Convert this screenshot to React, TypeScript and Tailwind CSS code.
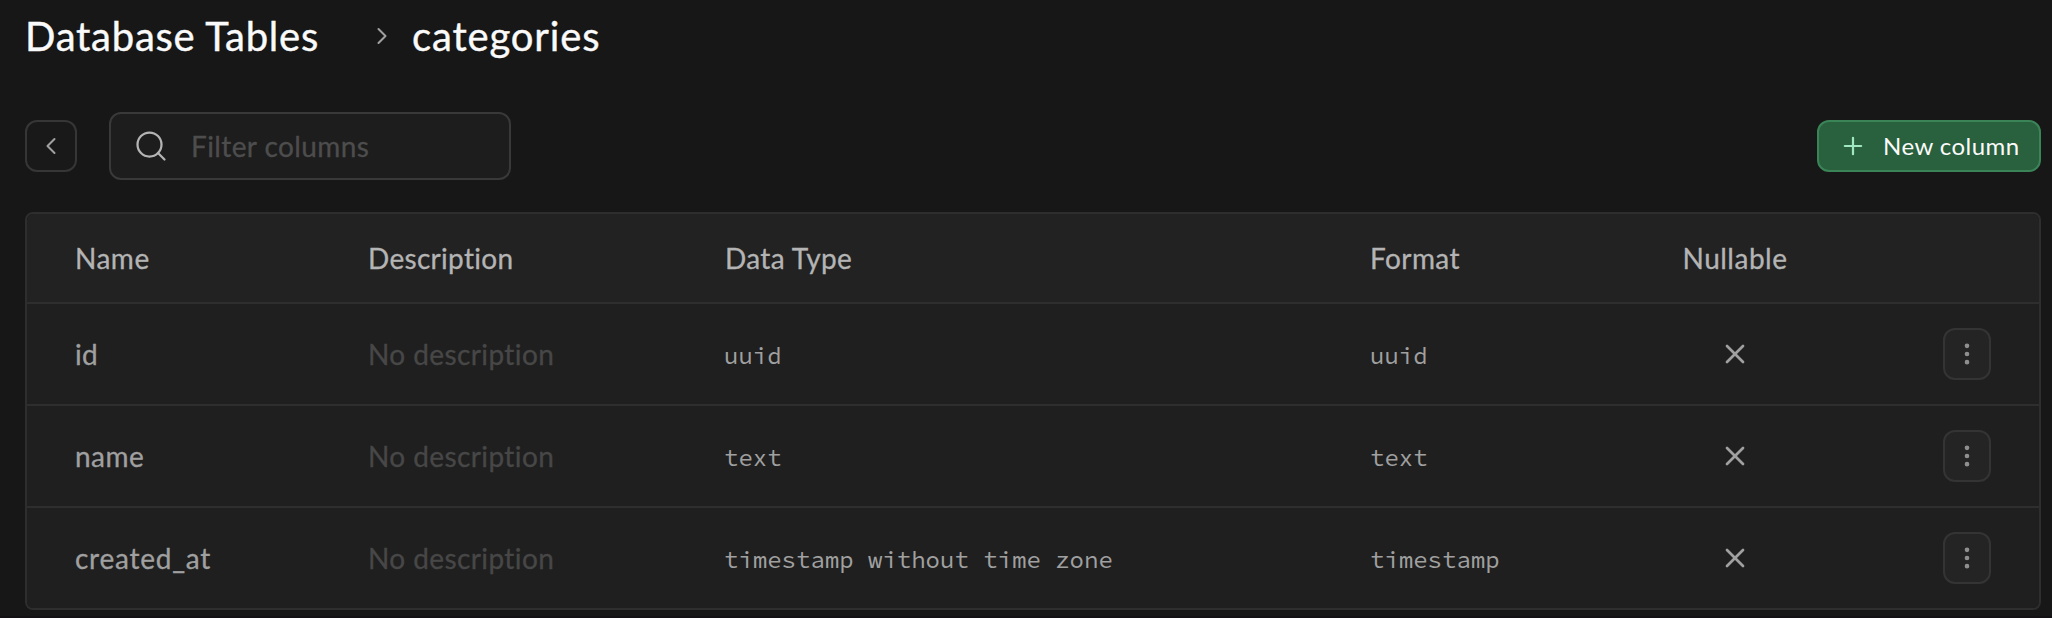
import { ChevronLeft, ChevronRight, EllipsisVertical, Plus, Search, X } from "lucide-react";

type Column = { name: string; dataType: string; format: string; nameTracking: string };

const columns: Column[] = [
  { name: "id", dataType: "uuid", format: "uuid", nameTracking: "tracking-[0.2px]" },
  { name: "name", dataType: "text", format: "text", nameTracking: "tracking-[0.5px]" },
  {
    name: "created_at",
    dataType: "timestamp without time zone",
    format: "timestamp",
    nameTracking: "tracking-[0.75px]",
  },
];

const rowGrid = "grid grid-cols-[292px_357px_646px_312px_202px_1fr] items-center";
const mono = "pt-[3px] font-['Source_Code_Pro','Liberation_Mono',monospace] text-2xl [-webkit-text-stroke:0px]";

function Breadcrumb() {
  return (
    <nav className="flex h-[72px] items-center text-[40px] leading-none text-[#fafafa] [-webkit-text-stroke:0.4px]">
      <span className="w-[343px] tracking-[0.75px]">Database Tables</span>
      <ChevronRight className="size-7 text-[#a0a0a0]" strokeWidth={1.75} />
      <span className="ml-[16px] tracking-[0.85px]">categories</span>
    </nav>
  );
}

function Toolbar() {
  return (
    <div className="mt-10 flex h-[68px] items-center">
      <button className="flex size-[52px] items-center justify-center rounded-xl border-2 border-[#363636] bg-[#191919] text-[#a0a0a0]">
        <ChevronLeft className="size-7" strokeWidth={1.75} />
      </button>
      <label className="ml-8 flex h-[68px] w-[402px] items-center rounded-xl border-2 border-[#393939] bg-[#1d1d1d] pl-[22px]">
        <Search className="size-9 text-[#b4b4b4]" strokeWidth={1.5} />
        <input
          className="ml-[22px] w-[280px] bg-transparent text-[28px] tracking-[0.4px] outline-none [-webkit-text-stroke:0.3px] placeholder:text-[#4d4d4d]"
          placeholder="Filter columns"
        />
      </label>
      <button className="ml-auto flex h-[52px] w-[224px] items-center rounded-xl border-2 border-[#3b8458] bg-[#29603d] pl-5 text-2xl text-[#fafafa]">
        <Plus className="size-7 text-[#9fe8c2]" strokeWidth={1.9} />
        <span className="ml-[16px] tracking-[0.45px]">New column</span>
      </button>
    </div>
  );
}

function ColumnRow({ column }: { column: Column }) {
  return (
    <div className={`${rowGrid} h-[102px] border-t-2 border-[#2e2e2e] bg-[#1f1f1f] text-[#a0a0a0]`}>
      <div className={`pl-12 ${column.nameTracking}`}>{column.name}</div>
      <div className="pl-[49px] tracking-[0.4px] text-[#474747]">No description</div>
      <div className={`pl-12 ${mono}`}>{column.dataType}</div>
      <div className={`pl-12 ${mono}`}>{column.format}</div>
      <div className="flex justify-center">
        <X className="size-8" strokeWidth={2} />
      </div>
      <div className="flex justify-end pr-12">
        <button className="flex h-[52px] w-12 items-center justify-center rounded-xl border-2 border-[#343434] bg-[#242424] text-[#8f8f8f]">
          <EllipsisVertical className="size-7" strokeWidth={2} />
        </button>
      </div>
    </div>
  );
}

export default function App() {
  return (
    <main className="h-[618px] w-[2052px] overflow-hidden border-b-2 border-[#131113] bg-[#171717] pr-[11px] pl-[25px] font-['Lato',sans-serif]">
      <Breadcrumb />
      <Toolbar />
      <section className="mt-8 overflow-hidden rounded-lg border-2 border-[#2e2e2e] text-[28px] leading-none [-webkit-text-stroke:0.3px]">
        <div className={`${rowGrid} h-[88px] bg-[#222222] text-[#b4b4b4]`}>
          <div className="pl-12 tracking-[0.5px]">Name</div>
          <div className="pl-[49px] tracking-[0.3px]">Description</div>
          <div className="pl-[49px] tracking-[0.35px]">Data Type</div>
          <div className="pl-12 tracking-[0.4px]">Format</div>
          <div className="text-center tracking-[0.5px]">Nullable</div>
          <div />
        </div>
        {columns.map((column) => (
          <ColumnRow key={column.name} column={column} />
        ))}
      </section>
    </main>
  );
}
